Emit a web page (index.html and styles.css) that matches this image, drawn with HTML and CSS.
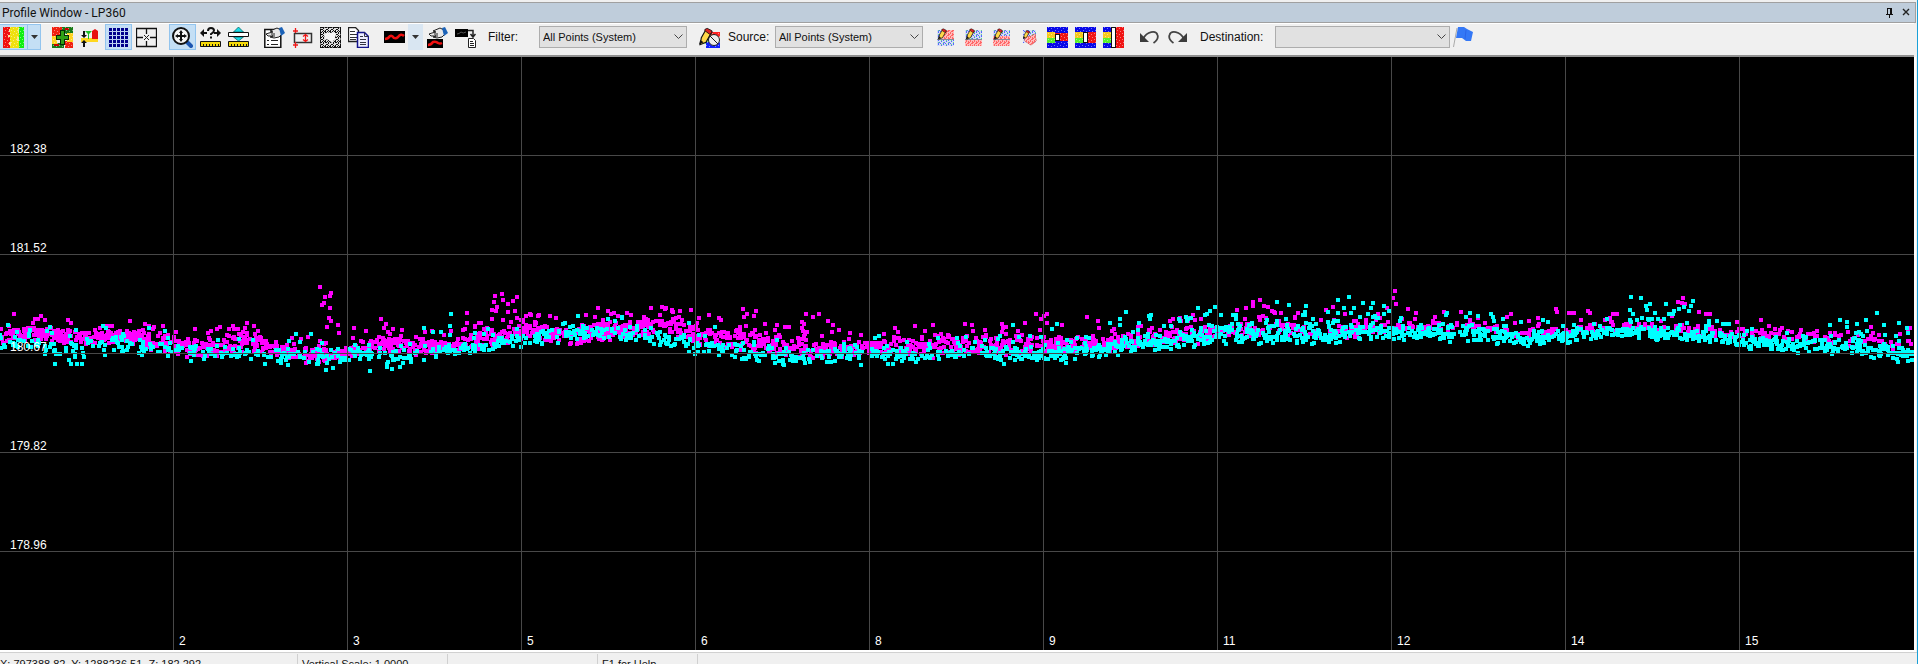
FILE: index.html
```html
<!DOCTYPE html>
<html lang="en">
<head>
    <meta charset="UTF-8">
    <meta name="viewport" content="width=device-width, initial-scale=1.0">
    <title>Profile Window - LP360</title>
    <link rel="stylesheet" href="styles.css">
</head>
<body>
    <!-- shared speckle patterns -->
    <svg class="defs" width="0" height="0" aria-hidden="true">
        <defs>
            <pattern id="dots" width="6" height="6" patternUnits="userSpaceOnUse">
                <path fill="#fff" fill-opacity=".45" d="M1 0h1v1h-1zM4 1h1v1h-1zM2 3h1v1h-1zM5 4h1v1h-1z"/>
            </pattern>
            <pattern id="red-dots" width="4" height="4" patternUnits="userSpaceOnUse">
                <path fill="#fbb" d="M0 0h4v4h-4z"/>
                <path fill="#f66" d="M0 0h2v1h-2zM3 1h1v2h-1zM1 2h1v2h-1zM2 3h1v1h-1z"/>
            </pattern>
            <pattern id="blue-dots" width="5" height="4" patternUnits="userSpaceOnUse">
                <path fill="#d4dcf4" d="M0 0h5v4h-5z"/>
                <path fill="#56f" d="M0 0h1v1h-1zM3 0h1v2h-1zM1 2h1v1h-1zM4 3h1v1h-1z"/>
                <path fill="#6d8" d="M1 1h1v1h-1zM3 3h1v1h-1z"/>
            </pattern>
            <pattern id="noise" width="5" height="5" patternUnits="userSpaceOnUse">
                <path fill="#111" d="M0 0h2v1h-2zM3 0h1v2h-1zM1 2h2v1h-2zM0 3h1v2h-1zM3 3h1v1h-1zM4 4h1v1h-1zM2 4h1v1h-1z"/>
            </pattern>
            <symbol id="pencil" viewBox="0 0 12 14">
                <path d="M6 1l5 2-5 9-5 2 1-6z" fill="#ffd84a" stroke="#111"/>
                <path d="M5 1l2-1 4 2v2l-2 1-4-3z" fill="#d22" stroke="#111" stroke-width=".7"/>
                <path d="M0 14l1-4 3 2z" fill="#111"/>
            </symbol>
            <symbol id="hand" viewBox="0 0 20 12">
                <path d="M1 7l3-1 4-1-3-1 7-3 4 2 1 4-3 3-5 1-4-1 3-1-5 0z" fill="#e8e8e8" stroke="#222"/>
                <path d="M6 7h4M7 9h3" stroke="#222" fill="none"/>
                <path d="M14 1l3-1 3 6-4 3z" fill="#1c63b8"/>
            </symbol>
        </defs>
    </svg>

    <div class="window">
        <header class="titlebar">
            <h1>Profile Window - LP360</h1>
            <div class="title-actions">
                <button type="button" aria-label="Pin"><svg width="9" height="10"><path d="M2 0h5v6h1v1H5v3H4V7H1V6h1zM3 1v5h2V1z" fill="#111" fill-rule="evenodd"/></svg></button>
                <button type="button" aria-label="Close"><svg width="9" height="9"><path d="M1 1l6 6M7 1l-6 6" stroke="#222" stroke-width="1.4"/></svg></button>
            </div>
        </header>

        <div class="toolbar">
            <div class="group">
                <div class="split on">
                    <button type="button" class="tool" aria-label="Color by">
                        <svg width="21" height="21" shape-rendering="crispEdges"><path fill="#f01010" d="M0 0h7v21H0z"/><path fill="#f0e010" d="M7 0h9v21H7z"/><path fill="#10f010" d="M16 0h5v21h-5z"/><path d="M6 2h1v3H6zM5 8h2v2H5zM6 15h2v3H6zM15 1h1v5h-1zM14 10h2v4h-2z" fill="#fbe7a0"/><path fill="url(#dots)" d="M0 0h21v21H0z"/></svg>
                    </button>
                    <button type="button" class="drop" aria-label="Color options"><svg width="7" height="4"><path d="M0 0h7L3.500 4z" fill="#333"/></svg></button>
                </div>
            </div>

            <div class="group">
                <button type="button" class="tool" aria-label="Add class">
                    <svg width="21" height="21" shape-rendering="crispEdges"><path fill="#f02010" d="M0 0h12v9H0zM13 14h8v7h-8z"/><path fill="#187a18" d="M10 0h11v7H10zM0 16h12v5H0z"/><path fill="#ffd21e" d="M0 9h5v8H0zM15 6h6v9h-6zM8 3h3v3H8z"/><path fill="#c00" d="M13 1h4v2h-4zM2 17h5v2H2z"/><path fill="url(#dots)" d="M0 0h21v21H0z"/><path d="M8.500 3.500h4v5h4v4h-4v5h-4v-5h-4v-4h4z" fill="#2fa016" stroke="#062b06"/></svg>
                </button>
                <button type="button" class="tool" aria-label="Classify above">
                    <svg width="21" height="21"><path fill="#ffd71f" d="M1 11h17v4H1z"/><path fill="#e81010" d="M12 12V4l3-2 3 2v8z"/><path fill="#1fbf2a" d="M5 4h7l-3 3v5H8V7z"/><path fill="#111" d="M3 4h2v4h2l-3 3-3-3h2zM3 20h2v-4h2l-3-3-3 3h2z"/></svg>
                </button>
                <button type="button" class="tool on" aria-label="Show grid">
                    <svg width="21" height="21" shape-rendering="crispEdges"><path d="M2.500 1v19M6.500 1v19M10.500 1v19M14.500 1v19M18.500 1v19" stroke="#00008b" stroke-width="3"/><path d="M0 4.500h21M0 8.500h21M0 12.500h21M0 16.500h21" stroke="#b9cdf0"/></svg>
                </button>
                <button type="button" class="tool" aria-label="Center view">
                    <svg width="21" height="21"><path d="M.5 1.500h20v18H.5zM10.500 1v6M10.500 14v6M0 10.500h7M14 10.500h7" fill="none" stroke="#111" stroke-width="1.300"/><path d="M8 8l5 5M13 8l-5 5" stroke="#222"/></svg>
                </button>
            </div>

            <div class="group">
                <button type="button" class="tool on" aria-label="Zoom">
                    <svg width="21" height="21"><path d="M14 14l5 5" stroke="#1d56b0" stroke-width="4" stroke-linecap="round"/><circle cx="9" cy="9" r="8" fill="#f7f7f7" stroke="#111" stroke-width="2"/><path d="M9 3l2 3h-1v2h2V7l3 2-3 2v-1h-2v2h1l-2 3-2-3h1v-2H6v1L3 9l3-2v1h2V6H7z" fill="#111"/></svg>
                </button>
                <button type="button" class="tool" aria-label="Measure">
                    <svg width="21" height="21"><path d="M0 6l4-4v3h3v2H4v3zM21 6l-4-4v3h-3v2h3v3z" fill="#111"/><path d="M8 4q0-3 3-3 3 0 3 2.500 0 1.500-3 3.500v1M11 9.500v2" fill="none" stroke="#111" stroke-width="2"/><path fill="#f5d90a" stroke="#111" d="M.5 14.500h20v5H.5z"/><path d="M3.500 17v3M6.500 17v3M9.500 17v3M12.500 17v3M15.500 17v3M18.500 17v3" stroke="#111"/></svg>
                </button>
                <button type="button" class="tool" aria-label="Measure height">
                    <svg width="21" height="21"><path d="M10.500 0l5 5h-10zM10.500 14l5-4h-10z" fill="#19dce8" stroke="#055" stroke-width=".7"/><path fill="#fff" stroke="#111" d="M.5 5.500h20v4H.5z"/><path fill="#f5d90a" stroke="#111" d="M.5 14.500h20v5H.5z"/><path d="M3.500 17v3M6.500 17v3M9.500 17v3M12.500 17v3M15.500 17v3M18.500 17v3" stroke="#111"/></svg>
                </button>
            </div>

            <div class="group">
                <button type="button" class="tool" aria-label="Identify">
                    <svg width="21" height="21"><path d="M.8 2.500h16v18H.8z" fill="#fff" stroke="#111" stroke-width="1.500"/><path d="M3 13.500h2M7 13.500h7M3 17.500h2M7 17.500h7" stroke="#222"/><use href="#hand" x="1" y="0" width="20" height="12"/></svg>
                </button>
                <button type="button" class="tool" aria-label="Profile box">
                    <svg width="21" height="21"><path d="M2.500 6.500h17v9h-17z" fill="none" stroke="#333" stroke-width="1.500"/><path d="M13.500 7v8M11 9.500l2.500-2 2.500 2M11 12.500l2.500 2 2.500-2M3.500 1v5M1 4h5M3.500 15v6M1 18h5" fill="none" stroke="#f01818" stroke-width="1.300"/></svg>
                </button>
                <button type="button" class="tool" aria-label="Polygon select">
                    <svg width="21" height="21"><path fill="#ddd" d="M0 0h21v21H0z"/><path fill="url(#noise)" d="M0 0h21v21H0z" shape-rendering="crispEdges"/><path d="M.5.500h20v20H.5z" fill="none" stroke="#111" stroke-dasharray="3 1"/><path d="M7 5l3 1 4-1 2 3-2 5-2 3-3-3-4-1-1-4 2-1z" fill="#f4f4f4"/></svg>
                </button>
                <button type="button" class="tool" aria-label="Copy">
                    <svg width="21" height="21"><path d="M.5.500h7l3 3v11H.5z" fill="#fff" stroke="#222" stroke-width="1.300"/><path d="M2 4.500h5M2 7.500h7M2 10.500h7M2 12.500h6" stroke="#333"/><path d="M9.500 5.500h7l4 4v11h-11z" fill="#eef" stroke="#14148c" stroke-width="1.500"/><path d="M16.500 5.500v4h4M12 9.500h3M12 12.500h6M12 15.500h6M12 17.500h6" stroke="#334" fill="none"/></svg>
                </button>
            </div>

            <div class="group">
                <div class="split">
                    <button type="button" class="tool" aria-label="Draw line">
                        <svg width="21" height="21"><path d="M0 4h21v12H0z"/><path d="M1 12q3 0 5-3 2-1 4 2 2 1 4-1 3-4 6-1" fill="none" stroke="#f01010" stroke-width="2.500"/></svg>
                    </button>
                    <button type="button" class="drop pale" aria-label="Line options"><svg width="7" height="4"><path d="M0 0h7L3.500 4z" fill="#333"/></svg></button>
                </div>
                <button type="button" class="tool" aria-label="Pick line">
                    <svg width="21" height="21"><path d="M0 12h16v9H0z"/><path d="M1 18q3 0 5-3 3-1 5 1 2 1 4 0" fill="none" stroke="#f01010" stroke-width="2.500"/><use href="#hand" x="1" y="0" width="20" height="12"/></svg>
                </button>
                <button type="button" class="tool" aria-label="Export line">
                    <svg width="21" height="21"><path d="M0 2h13v8H0z"/><path d="M2 7q2 0 4-2 2 2 5 0" fill="none" stroke="#555"/><path d="M13 3.500h5V9M15.500 7l2.500 3 2.500-3" fill="none" stroke="#222" stroke-width="1.500"/><path d="M13.500 11.500h5l2 2v7h-7z" fill="#fff" stroke="#222"/><path d="M15 14.500h3M15 16.500h4M15 18.500h4" stroke="#222"/></svg>
                </button>
            </div>

            <div class="field">
                <label for="filter">Filter:</label>
                <span class="combo">
                    <select id="filter"><option>All Points (System)</option></select>
                    <svg width="9" height="6"><path d="M.5.500l4 4 4-4" fill="none" stroke="#444"/></svg>
                </span>
            </div>
            <button type="button" class="tool" aria-label="Edit classes">
                <svg width="21" height="21"><path fill="#f22" d="M12 5h9v5h-9z"/><path fill="#8e8" d="M5 10h5v7H5z"/><path fill="#12f" d="M7 15h14v6H7z"/><path fill="url(#dots)" d="M5 5h16v16H5z"/><circle cx="15" cy="13" r="5.500" fill="#eee" stroke="#222"/><path d="M11 9l8 8" stroke="#222"/><use href="#pencil" x="0" y="0" width="14" height="19"/></svg>
            </button>
            <div class="field source">
                <label for="source">Source:</label>
                <span class="combo">
                    <select id="source"><option>All Points (System)</option></select>
                    <svg width="9" height="6"><path d="M.5.500l4 4 4-4" fill="none" stroke="#444"/></svg>
                </span>
            </div>

            <div class="group">
                <button type="button" class="tool" aria-label="Classify above line">
                    <svg width="21" height="21"><path fill="url(#red-dots)" d="M6 3h13v9H6z"/><path fill="url(#blue-dots)" d="M2 3h5v9H2zM2 13h17v6H2z"/><path d="M2 12.500h17" stroke="#889"/><use href="#pencil" x="3" y="1" width="9" height="12"/></svg>
                </button>
                <button type="button" class="tool" aria-label="Classify below line">
                    <svg width="21" height="21"><path fill="url(#blue-dots)" d="M2 3h17v9H2z"/><path fill="url(#red-dots)" d="M2 13h17v6H2z"/><path d="M2 12.500h17" stroke="#889"/><use href="#pencil" x="3" y="1" width="9" height="12"/></svg>
                </button>
                <button type="button" class="tool" aria-label="Classify between lines">
                    <svg width="21" height="21"><path fill="url(#blue-dots)" d="M2 3h17v7H2z"/><path fill="url(#red-dots)" d="M2 9h17v10H2z"/><path d="M2 12.500h17" stroke="#889"/><use href="#pencil" x="3" y="1" width="9" height="12"/></svg>
                </button>
                <button type="button" class="tool" aria-label="Classify polygon">
                    <svg width="21" height="21"><path fill="url(#blue-dots)" d="M4 3h13v13H4z"/><path d="M6 9l5 1 5-3 1 7-5 4-6-4z" fill="#fbb" stroke="#c44"/><path fill="url(#red-dots)" d="M6 9l5 1 5-3 1 7-5 4-6-4z"/><use href="#pencil" x="4" y="3" width="7" height="9"/></svg>
                </button>
                <button type="button" class="tool" aria-label="Classify rectangle">
                    <svg width="21" height="21" shape-rendering="crispEdges"><path fill="#0808e8" d="M0 0h21v21H0z"/><path fill="#f7c81c" d="M0 5h8v6H0z"/><path fill="#58f02c" d="M0 11h8v5H0z"/><path fill="#f01414" d="M8 6h13v8H8z"/><path fill="url(#dots)" d="M0 0h21v21H0z"/><path fill="#fff" stroke="#111" d="M8.500 7.500h4v6h-4z"/></svg>
                </button>
                <button type="button" class="tool" aria-label="Classify tall rectangle">
                    <svg width="21" height="21" shape-rendering="crispEdges"><path fill="#0808e8" d="M0 0h21v21H0z"/><path fill="#f7c81c" d="M0 5h9v6H0z"/><path fill="#58f02c" d="M0 11h9v5H0z"/><path fill="#f01414" d="M12 5h9v11h-9z"/><path fill="url(#dots)" d="M0 0h21v21H0z"/><path fill="#fff" stroke="#111" d="M8.500 5.500h4v10h-4z"/></svg>
                </button>
                <button type="button" class="tool" aria-label="Classify column">
                    <svg width="21" height="21" shape-rendering="crispEdges"><path fill="#0808e8" d="M0 0h12v21H0z"/><path fill="#f7c81c" d="M0 5h8v6H0z"/><path fill="#58f02c" d="M0 11h8v5H0z"/><path fill="#f01414" d="M12 0h9v21h-9z"/><path fill="url(#dots)" d="M0 0h21v21H0z"/><path fill="#fff" stroke="#111" d="M8.500.500h4v20h-4z"/></svg>
                </button>
            </div>

            <div class="group">
                <button type="button" class="tool" aria-label="Undo">
                    <svg width="21" height="21"><path d="M4 12C8 4 17 3 18.500 8c1 3-1 6-4 8" fill="none" stroke="#444" stroke-width="1.800"/><path d="M1 6v9h9z" fill="#3c3c3c"/></svg>
                </button>
                <button type="button" class="tool" aria-label="Redo">
                    <svg width="21" height="21"><path d="M17 12C13 4 4 3 2.500 8c-1 3 1 6 4 8" fill="none" stroke="#444" stroke-width="1.800"/><path d="M20 6v9h-9z" fill="#3c3c3c"/></svg>
                </button>
            </div>

            <div class="field destination">
                <label for="destination">Destination:</label>
                <span class="combo">
                    <select id="destination"><option></option></select>
                    <svg width="9" height="6"><path d="M.5.500l4 4 4-4" fill="none" stroke="#444"/></svg>
                </span>
                <button type="button" class="tool" aria-label="Flag">
                    <svg width="21" height="21"><path d="M4 1L.5 20" stroke="#aaa"/><path d="M5 0l6 0 3 2 6 3-2 9-5 0-4-3-6 0z" fill="#3478f6"/><path d="M13 3l-1 9" stroke="#2a66e8"/></svg>
                </button>
            </div>
        </div>

        <main class="plot">
            <svg class="chart" width="100%" height="100%" role="img" aria-label="Point cloud profile">
                <g shape-rendering="crispEdges">
                    <path id="magenta" fill="#f0f"/>
                    <path id="cyan" fill="#0ff"/>
                </g>
                <g id="grid" class="grid"></g>
                <g id="labels" class="labels"></g>
            </svg>
        </main>

        <footer class="statusbar">
            <span class="coords">X: 797388.82, Y: 1288236.51, Z: 182.292</span>
            <span>Vertical Scale: 1.0000</span>
            <span></span>
            <span class="help">F1 for Help</span>
        </footer>
    </div>
    <script src="profile.js"></script>
</body>
</html>
```
FILE: styles.css
```css
* {
    box-sizing: border-box;
}

body {
    margin: 0;
    height: 100vh;
    overflow: hidden;
    background-color: #f0f0f0;
    font-family: "Liberation Sans", Arial, sans-serif;
    font-size: 11px;
    color: #111;
}

.defs {
    position: absolute;
}

.window {
    height: 100vh;
    display: flex;
    flex-direction: column;
    padding-top: 2px;
    border-right: 1px solid #18a0d8;
}

button {
    display: flex;
    align-items: center;
    justify-content: center;
    padding: 0;
    border: none;
    background: transparent;
}

/* title bar */
.titlebar {
    flex: none;
    height: 21px;
    margin-right: 1px;
    padding: 0 4px 0 2px;
    display: flex;
    align-items: center;
    justify-content: space-between;
    background-color: #bfcddb;
    border: 1px solid #a0a0a0;
    border-left: none;
}

.titlebar h1 {
    margin: 0;
    font-family: Roboto, sans-serif;
    font-size: 12px;
    font-weight: normal;
}

.title-actions {
    display: flex;
    gap: 8px;
}

/* toolbar */
.toolbar {
    flex: none;
    height: 34px;
    border-top: 1px solid #fff;
    border-bottom: 2px solid #909090;
    margin-right: 3px;
    display: flex;
    align-items: flex-start;
    gap: 9px;
}

.group {
    display: flex;
    gap: 1px;
}

.tool {
    flex: none;
    width: 27px;
    height: 26px;
}

.on {
    background-color: #c4dff5;
    border: 1px solid #92c4ee;
}

.split {
    display: flex;
    width: 42px;
    height: 26px;
}

.split.on {
    width: 41px;
    margin-right: -1px;
    border-left: none;
}

.drop {
    width: 15px;
}

.on .tool,
.on .drop {
    height: 24px;
}

.on .drop {
    width: 14px;
    border-left: 1px solid #92c4ee;
}

.pale {
    background-color: #d9e6f2;
}

.field {
    display: flex;
    align-items: center;
    height: 26px;
}

.field label {
    width: 51px;
    font-size: 12px;
}

.source {
    margin-left: -4px;
}

.source label {
    width: 47px;
}

.destination label {
    width: 75px;
}

.combo {
    display: flex;
    align-items: center;
    position: relative;
}

.combo select {
    appearance: none;
    width: 148px;
    height: 22px;
    padding: 0 20px 0 3px;
    border: 1px solid #adadad;
    border-radius: 0;
    background-color: #e1e1e1;
    font-family: inherit;
    font-size: 11px;
    color: #111;
}

.destination select {
    width: 175px;
}

.combo svg {
    position: absolute;
    right: 4px;
    pointer-events: none;
}

/* profile plot */
.plot {
    flex: 1;
    min-height: 0;
    margin-right: 1px;
    background-color: #000;
    border-right: 2px solid #fff;
    border-bottom: 2px solid #fff;
}

.chart {
    display: block;
}

.grid {
    stroke: #484848;
    shape-rendering: crispEdges;
}

.labels {
    fill: #fff;
    font-size: 12px;
}

/* status bar, only its top edge is on screen */
.statusbar {
    flex: none;
    height: 12px;
    overflow: hidden;
    display: flex;
    border-top: 1px solid #d0d0d0;
}

.statusbar span {
    width: 150px;
    height: 24px;
    margin-top: 1px;
    padding: 4px 4px 0;
    border-right: 1px solid #d0d0d0;
    font-size: 11px;
    white-space: nowrap;
}

.statusbar .coords {
    width: 298px;
    padding-left: 0;
}

.statusbar .help {
    width: 100px;
}
```
FILE: profile.js
```js
// bands: [x, top, bottom]
const magentaBand = [
    [0,271,285],[41,271,285],[82,273,288],[122,273,285],[163,276,296],[204,283,303],[245,273,296],[265,281,298],
    [306,290,308],[347,291,303],[367,281,300],[388,273,300],[429,285,298],[469,276,295],[502,262,290],[531,265,285],
    [571,268,288],[612,265,283],[640,263,282],[660,258,276],[681,260,283],[701,266,293],[742,273,296],[783,278,301],
    [824,285,303],[864,285,298],[905,278,301],[946,275,300],[987,280,300],[1028,275,300],[1069,278,296],[1109,280,295],
    [1150,276,288],[1191,268,288],[1232,270,281],[1262,262,282],[1280,262,280],[1319,271,283],[1360,268,280],
    [1400,265,276],[1441,263,275],[1482,262,276],[1523,268,285],[1564,266,280],[1605,263,275],[1645,265,275],
    [1686,268,276],[1727,273,281],[1768,273,283],[1809,273,286],[1849,276,290],[1890,281,293],[1912,280,296]
];

const cyanBand = [
    [0,275,293],[41,278,296],[82,280,308],[122,275,300],[163,283,303],[204,285,305],[245,293,306],[286,290,308],
    [327,291,309],[367,293,303],[388,290,309],[429,290,306],[449,288,298],[490,281,296],[531,276,288],[571,268,286],
    [612,268,285],[640,272,288],[681,276,290],[693,280,298],[722,285,303],[762,288,308],[803,290,309],[844,291,303],
    [885,288,306],[926,291,306],[966,286,303],[1007,288,303],[1048,290,305],[1089,288,301],[1130,280,296],
    [1171,275,295],[1211,266,291],[1252,266,286],[1278,268,287],[1319,265,289],[1360,266,283],[1400,268,285],
    [1441,266,285],[1482,268,285],[1523,275,290],[1564,275,286],[1605,271,281],[1645,270,281],[1686,271,285],
    [1727,275,290],[1768,278,295],[1809,280,298],[1849,280,298],[1890,285,304],[1912,286,304]
];

// points away from the ground band
const magentaPoints = [
    [14,257],[41,259],[320,230],[331,236],[325,240],[330,239],[324,246],[322,248],[330,251],[329,261],[331,264],
    [327,270],[338,268],[339,276],[381,262],[386,267],[354,271],[402,273],[245,271],[467,256],[495,239],[502,237],
    [494,245],[503,243],[508,247],[513,244],[517,240],[492,253],[497,250],[496,254],[515,254],[531,258],[550,259],
    [586,258],[598,251],[608,254],[611,257],[627,256],[672,254],[680,254],[743,252],[747,257],[756,254],[754,259],
    [744,260],[765,267],[806,257],[819,257],[813,260],[802,265],[804,267],[802,271],[828,264],[833,268],[832,275],
    [839,273],[1036,257],[1047,257],[1044,259],[1041,262],[1047,266],[1002,267],[1006,270],[1087,260],[1098,264],
    [1099,271],[1112,274],[1237,253],[1246,251],[1253,245],[1253,249],[1260,243],[1264,249],[1268,250],[1272,254],
    [1275,256],[1281,256],[1295,260],[1326,253],[1333,250],[1345,257],[1378,257],[1387,251],[1395,234],[1393,241],
    [1396,247],[1408,252],[1556,252],[1557,255],[1570,256],[1588,254],[1613,257],[1617,257],[1538,261],[1661,264],
    [1678,245],[1683,241],[1682,246],[1685,247],[1699,255],[1706,257],[1710,257],[1717,264],[1737,265],[1782,271],
    [1910,271],[1873,276]
];

const cyanPoints = [
    [296,277],[311,277],[424,271],[433,275],[441,275],[451,257],[450,269],[450,278],[615,264],[326,313],[333,311],
    [370,314],[387,310],[392,312],[400,310],[55,307],[71,307],[77,307],[82,307],[689,266],[715,270],[1013,268],
    [1057,267],[1052,272],[1110,266],[1120,262],[1120,268],[1126,255],[1139,266],[1149,259],[1151,258],[1150,262],
    [1164,269],[1179,262],[1186,260],[1198,251],[1205,258],[1207,257],[1210,254],[1215,250],[1221,258],[1277,245],
    [861,308],[888,307],[1004,307],[1066,306],[1289,248],[1306,249],[1305,255],[1303,258],[1313,262],[1328,255],
    [1338,243],[1349,240],[1344,251],[1354,251],[1363,246],[1373,246],[1371,251],[1368,257],[1360,260],[1384,249],
    [1389,254],[1384,257],[1401,261],[1470,256],[1478,259],[1491,257],[1543,263],[1548,265],[1521,265],[1631,240],
    [1641,241],[1630,253],[1633,257],[1646,249],[1650,247],[1647,253],[1655,256],[1642,261],[1648,262],[1666,247],
    [1674,254],[1673,257],[1669,257],[1679,252],[1684,250],[1689,254],[1691,249],[1693,244],[1709,264],[1840,263],
    [1847,265],[1830,268],[1857,267],[1866,263],[1877,256],[1884,268],[1899,266],[1907,271]
];

let seed = 360;
function random() {
    seed = (seed * 1664525 + 1013904223) % 4294967296;
    return seed / 4294967296;
}

function square(x, y) {
    return `M${Math.round(x) - 2} ${Math.round(y) - 2}h4v4h-4z`;
}

function buildPath(band, points, density) {
    let d = points.map(p => square(p[0], p[1])).join('');
    for (let i = 0; i < band.length - 1; i++) {
        const [x0, top0, bottom0] = band[i];
        const [x1, top1, bottom1] = band[i + 1];
        const count = (x1 - x0) * density(x0);
        for (let n = 0; n < count; n++) {
            const t = random();
            const top = top0 + (top1 - top0) * t - 2;
            const bottom = bottom0 + (bottom1 - bottom0) * t + 1;
            let y = top + (bottom - top) * (random() * 0.6 + random() * 0.4);
            // a few strays just above the band
            if (random() < 0.06) {
                y = top - random() * 8;
            }
            d += square(x0 + (x1 - x0) * t, y);
        }
    }
    return d;
}

document.getElementById('magenta').setAttribute('d', buildPath(magentaBand, magentaPoints,
    x => x < 700 ? 1.6 : x < 1200 ? 1.4 : x < 1420 ? 0.8 : 0.5));
document.getElementById('cyan').setAttribute('d', buildPath(cyanBand, cyanPoints,
    x => x < 430 ? 0.65 : x < 1000 ? 0.8 : 1.2));

// grid lines and their labels
const rows = [[98, '182.38'], [197, '181.52'], [296, '180.67'], [395, '179.82'], [494, '178.96']];
const columns = ['2', '3', '5', '6', '8', '9', '11', '12', '14', '15'];
let lines = '';
let labels = '';
rows.forEach(([y, text]) => {
    lines += `<line x1="0" x2="100%" y1="${y}" y2="${y}"/>`;
    labels += `<text x="10" y="${y - 2}">${text}</text>`;
});
columns.forEach((text, i) => {
    const x = 173 + i * 174;
    lines += `<line x1="${x}" x2="${x}" y1="0" y2="100%"/>`;
    labels += `<text x="${x + 6}" y="588">${text}</text>`;
});
document.getElementById('grid').innerHTML = lines;
document.getElementById('labels').innerHTML = labels;
```
